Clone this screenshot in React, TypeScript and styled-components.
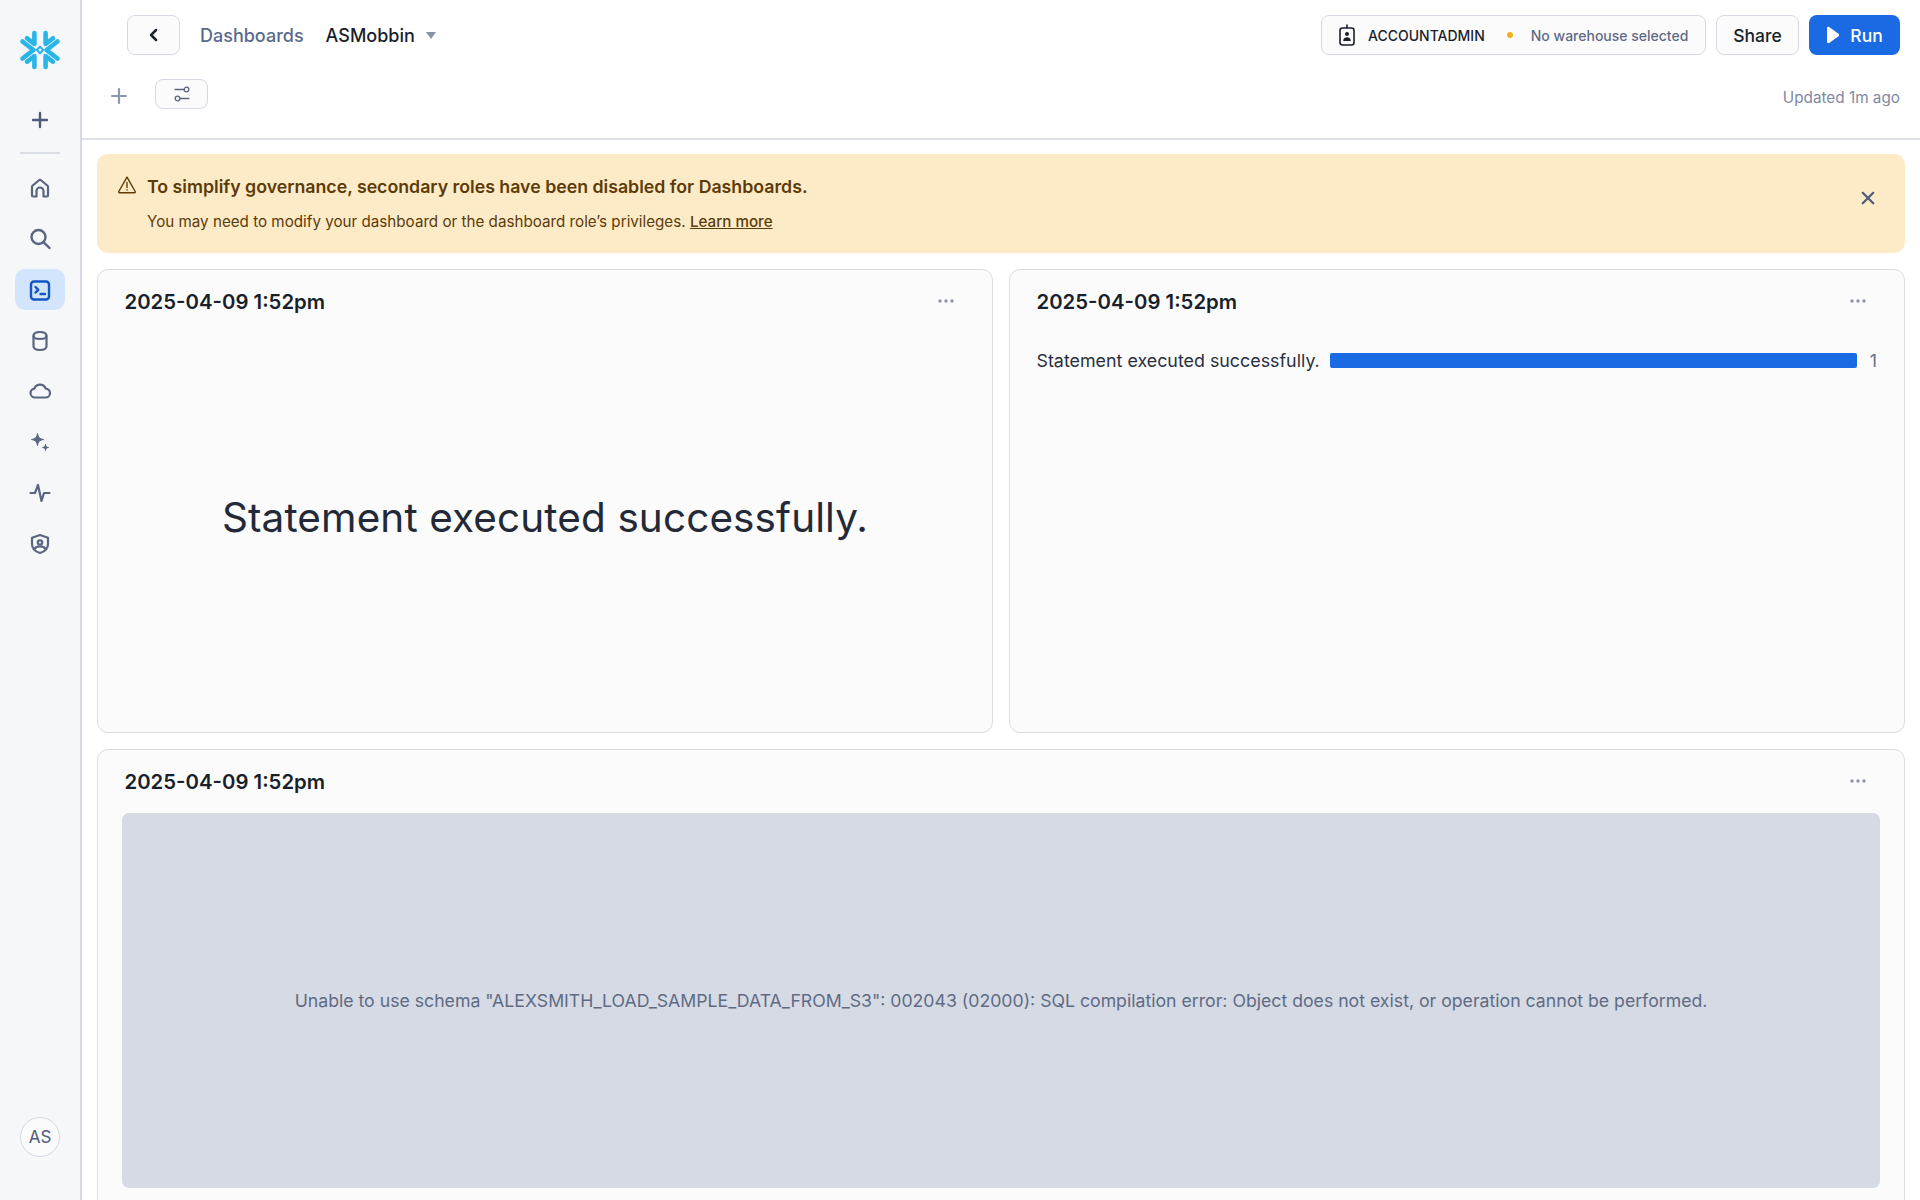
import React from "react";
import styled, { createGlobalStyle } from "styled-components";

const Global = createGlobalStyle`
  html, body { margin: 0; padding: 0; height: 100%; background: #fff; }
  body { font-family: Inter, "Liberation Sans", sans-serif; overflow: hidden; -webkit-font-smoothing: antialiased; }
  #root { height: 100%; }
  * { box-sizing: border-box; }
`;

const Page = styled.div`display: flex; width: 1920px; height: 1200px; overflow: hidden; background: #fff;`;

const Sidebar = styled.aside`
  width: 82px; flex: none; background: #f6f7f9; border-right: 2px solid #d5d9e2;
  display: flex; flex-direction: column; align-items: center; padding-top: 29px; padding-bottom: 43px;
`;
const Logo = styled.div`width: 42px; height: 42px; margin-bottom: 37px; svg { display: block; }`;
const AddItem = styled.div`width: 24px; height: 24px; color: #4f5b78; svg { display: block; }`;
const SideDivider = styled.div`width: 40px; height: 2px; background: #d9dde5; margin: 20px 0 13px;`;
const SideItem = styled.div<{ $active?: boolean }>`
  width: 50px; height: 41px; margin-bottom: 10px; border-radius: 10px; display: flex; align-items: center; justify-content: center;
  background: ${(p) => (p.$active ? "#d3e4fd" : "transparent")};
  color: ${(p) => (p.$active ? "#1457c4" : "#5a6580")};
  svg { display: block; }
`;
const Avatar = styled.div`
  margin-top: auto; width: 40px; height: 40px; border-radius: 50%; border: 1.5px solid #d5d9e2; background: #fbfbfc;
  display: flex; align-items: center; justify-content: center; color: #4f5b7a; font-size: 17px;
`;

const Main = styled.main`flex: 1; min-width: 0; display: flex; flex-direction: column;`;
const Header = styled.header`height: 140px; flex: none; border-bottom: 2px solid #dfe2e8; padding: 15px 20px 0 45px; display: flex; flex-direction: column;`;
const TopRow = styled.div`display: flex; align-items: center; height: 40px;`;
const SecondRow = styled.div`display: flex; align-items: center; height: 30px; margin-top: 24px;`;

const OutlineBtn = styled.button`
  border: 1.5px solid #d5d9e2; border-radius: 8px; background: #fbfbfc; display: flex; align-items: center; justify-content: center; padding: 0; font-family: inherit; color: #1a1f2c;
`;
const BackBtn = styled(OutlineBtn)`width: 53px; height: 40px; svg { display: block; }`;
const Crumb = styled.span`color: #5a6a8c; font-size: 18px; font-weight: 500; margin-left: 20px;`;
const Title = styled.span`color: #1a1f2c; font-size: 18px; font-weight: 500; margin-left: 22px;`;
const Caret = styled.span`width: 0; height: 0; margin-left: 11px; margin-top: 1px; border-left: 5.5px solid transparent; border-right: 5.5px solid transparent; border-top: 7px solid #8a93a5;`;
const Spacer = styled.div`flex: 1;`;
const ContextPill = styled(OutlineBtn)`width: 385px; height: 40px; justify-content: flex-start; padding-left: 17px;`;
const RoleName = styled.span`font-size: 14px; font-weight: 500; color: #1a1f2c; margin-left: 13px;`;
const Dot = styled.span`width: 6px; height: 6px; border-radius: 50%; background: #f2b01e; margin-left: 22px;`;
const Warehouse = styled.span`font-size: 14px; font-weight: 500; color: #5f6a85; margin-left: 18px;`;
const ShareBtn = styled(OutlineBtn)`width: 83px; height: 40px; margin-left: 10px; font-size: 17.5px; font-weight: 500;`;
const RunBtn = styled.button`
  width: 91px; height: 40px; margin-left: 10px; border: none; border-radius: 8px; background: #1a6ae3; color: #fff; font-family: inherit; font-size: 17.5px; font-weight: 500;
  display: flex; align-items: center; justify-content: center; gap: 10px; padding: 0; svg { display: block; }
`;
const PlusBtn = styled.div`width: 24px; height: 24px; margin: 3px 24px 0 -20px; color: #8b98b0; svg { display: block; }`;
const FilterBtn = styled(OutlineBtn)`width: 53px; height: 30px; margin-top: -1px; svg { display: block; }`;
const Updated = styled.span`font-size: 15.3px; color: #8089a0; margin-top: 6px;`;

const Content = styled.div`flex: 1; min-height: 0; overflow: hidden; padding: 14px 15px 0 15px; display: flex; flex-direction: column; gap: 16px;`;
const Banner = styled.div`
  height: 99px; flex: none; background: #fdebc8; border-radius: 11px; padding: 0 21px 0 20px; display: flex; align-items: center; color: #5c3b09;
`;
const WarnIcon = styled.div`width: 20px; height: 20px; margin-top: -37px; margin-right: 10px; flex: none; svg { display: block; }`;
const BannerText = styled.div`flex: 1; display: flex; flex-direction: column; gap: 14px;`;
const BannerTitle = styled.div`font-size: 17.74px; font-weight: 600; line-height: 22px;`;
const BannerBody = styled.div`font-size: 15.2px; line-height: 20px; a { color: inherit; text-decoration: underline; font-weight: 500; }`;
const CloseIcon = styled.div`width: 18px; height: 18px; color: #4f5c78; margin: 0 7px 12px 0; svg { display: block; }`;

const CardRow = styled.div`display: grid; grid-template-columns: 1fr 1fr; gap: 16px; height: 464px; flex: none;`;
const Card = styled.section`
  border: 1.5px solid #d9dce3; border-radius: 11px; background: #fbfbfc; display: flex; flex-direction: column; min-width: 0;
`;
const WideCard = styled(Card)`height: 480px; flex: none; border-bottom-left-radius: 0; border-bottom-right-radius: 0;`;
const CardHead = styled.div`height: 62px; flex: none; display: flex; align-items: center; justify-content: space-between; padding: 0 37px 0 26.5px;`;
const CardTitle = styled.h3`margin: 0; font-size: 20.35px; font-weight: 600; line-height: 24px; color: #1a1f2c; margin-top: 1px;`;
const Dots = styled.div`color: #8d96a8; width: 18px; margin-top: -1px; svg { display: block; }`;
const BigMessage = styled.div`flex: 1; display: flex; align-items: center; justify-content: center; font-size: 40.5px; color: #232937; padding-bottom: 30px; letter-spacing: 0.1px;`;
const BarRow = styled.div`display: flex; align-items: center; padding: 18px 27px 0 26.5px; font-size: 17.85px; color: #2a3040;`;
const BarTrack = styled.div`flex: 1; margin: 0 10px; height: 15px; background: #1a6ae3; border-radius: 2px;`;
const BarValue = styled.span`color: #66718a; margin-left: 3px;`;
const ErrorPanel = styled.div`
  margin: 1px 24px 0 24px; height: 375px; flex: none; border-radius: 7px; background: #d6dae4; display: flex; align-items: center; justify-content: center;
  font-size: 17.68px; color: #5f6b85;
`;

const Ico: React.FC<{ s?: number; w?: number; children: React.ReactNode }> = ({ s = 24, w = 2, children }) => (
  <svg width={s} height={s} viewBox="0 0 24 24" fill="none" stroke="currentColor" strokeWidth={w} strokeLinecap="round" strokeLinejoin="round">{children}</svg>
);

const SnowflakeLogo = () => (
  <svg width="42" height="42" viewBox="0 0 42 42" fill="none" stroke="#29b5e8" strokeWidth="4.6" strokeLinecap="round" strokeLinejoin="round">
    <path d="M15.4 4v11L8 9.300" />
    <path d="M26.600 4v11L34 9.300" />
    <path d="M15.400 38V27L8 32.700" />
    <path d="M26.600 38V27L34 32.700" />
    <path d="M3.500 12.500 14.500 21 3.500 29.500" />
    <path d="M38.500 12.500 27.500 21 38.500 29.500" />
    <path d="M21 16.300 25.700 21 21 25.700 16.300 21Z M21 19.200 19.200 21 21 22.800 22.800 21Z" fill="#29b5e8" fillRule="evenodd" stroke="none" />
  </svg>
);

const Header1 = () => (
  <Header>
    <TopRow>
      <BackBtn><Ico s={20} w={3}><path d="M14.500 6l-6 6 6 6" /></Ico></BackBtn>
      <Crumb>Dashboards</Crumb>
      <Title>ASMobbin</Title>
      <Caret />
      <Spacer />
      <ContextPill>
        <svg width="16" height="22" viewBox="0 0 16 22" fill="none" stroke="#1a1f2c" strokeWidth="1.600">
          <rect x="1" y="4" width="14" height="17" rx="2.500" />
          <path d="M8 0.500V4" />
          <circle cx="8" cy="10" r="2" fill="#1a1f2c" stroke="none" />
          <path d="M4.200 17c0-2.600 1.700-3.800 3.800-3.800s3.800 1.200 3.800 3.800z" fill="#1a1f2c" stroke="none" />
        </svg>
        <RoleName>ACCOUNTADMIN</RoleName>
        <Dot />
        <Warehouse>No warehouse selected</Warehouse>
      </ContextPill>
      <ShareBtn>Share</ShareBtn>
      <RunBtn>
        <svg width="14" height="18" viewBox="0 0 14 18"><path d="M1 2.200C1 1 2.200.4 3.200 1l9.300 6.700c.8.600.8 2 0 2.600L3.200 17C2.200 17.600 1 17 1 15.800z" fill="#fff" /></svg>
        Run
      </RunBtn>
    </TopRow>
    <SecondRow>
      <PlusBtn><Ico w={2.2}><path d="M12 5v14M5 12h14" /></Ico></PlusBtn>
      <FilterBtn>
        <svg width="16" height="16" viewBox="0 0 16 16" fill="none" stroke="#5a6580" strokeWidth="1.300" strokeLinecap="round">
          <path d="M1 3.500h9M6 12.500h9" /><circle cx="12.500" cy="3.500" r="2.300" /><circle cx="3.500" cy="12.500" r="2.300" />
        </svg>
      </FilterBtn>
      <Spacer />
      <Updated>Updated 1m ago</Updated>
    </SecondRow>
  </Header>
);

function Dot3() {
  return (
    <svg width="18" height="6" viewBox="0 0 18 6" fill="currentColor"><circle cx="3" cy="3" r="1.700" /><circle cx="9" cy="3" r="1.700" /><circle cx="15" cy="3" r="1.700" /></svg>
  );
}

export default function App() {
  return (
    <Page>
      <Global />
      <Sidebar>
        <Logo><SnowflakeLogo /></Logo>
        <AddItem><Ico w={2.4}><path d="M12 5v14M5 12h14" /></Ico></AddItem>
        <SideDivider />
        <SideItem><Ico w={2.2}><path d="M4 19.500V11c0-.6.3-1.100.7-1.500l6-5a2 2 0 0 1 2.600 0l6 5c.4.4.7.9.7 1.500v8.500a1 1 0 0 1-1 1h-3.500V15a3.500 3.500 0 0 0-7 0v5.500H5a1 1 0 0 1-1-1z" /></Ico></SideItem>
        <SideItem><Ico w={2.4}><circle cx="10.500" cy="10" r="7" /><path d="M15.800 15.300L21.500 21" /></Ico></SideItem>
        <SideItem $active><Ico w={2.4}><rect x="3" y="3.500" width="18" height="18" rx="3" /><path d="M7.500 9l2.800 2.800-2.800 2.800M12.500 16h4.500" /></Ico></SideItem>
        <SideItem><Ico w={2.2}><path d="M5.500 7c0-2.500 2.500-4 6.500-4s6.500 1.500 6.500 4v10c0 2.500-2.500 4-6.500 4s-6.500-1.500-6.500-4z" /><path d="M5.500 7c0 2 2.500 3 6.500 3s6.500-1 6.500-3" /></Ico></SideItem>
        <SideItem><Ico w={2.2}><path d="M7 17.500a4.500 4.500 0 0 1-.6-8.960A6 6 0 0 1 17.700 8.700 4.400 4.400 0 0 1 17.500 17.500z" /></Ico></SideItem>
        <SideItem>
          <svg width="24" height="24" viewBox="0 0 24 24" fill="currentColor" stroke="currentColor" strokeWidth="1" strokeLinejoin="round">
            <path d="M9.500 2.500c.5 3.800 2.200 5.500 6 6-3.800.5-5.500 2.200-6 6-.5-3.800-2.200-5.500-6-6 3.800-.5 5.500-2.200 6-6z" />
            <path d="M17.500 13.500c.2 1.900 1.100 2.800 3 3-1.900.2-2.800 1.100-3 3-.2-1.900-1.100-2.800-3-3 1.900-.2 2.800-1.100 3-3z" />
          </svg>
        </SideItem>
        <SideItem><Ico w={2.2}><path d="M2.500 11H7l3-8 3.500 16 2.500-8h5.500" /></Ico></SideItem>
        <SideItem><Ico w={2.2}><path d="M12 2l8 2.800V11c0 4.500-3.200 7.600-8 9-4.800-1.400-8-4.500-8-9V4.800z" /><circle cx="12" cy="9.500" r="2.200" /><path d="M6.500 16c1-2 3-2.700 5.500-2.700s4.500.7 5.500 2.700" /></Ico></SideItem>
        <Avatar>AS</Avatar>
      </Sidebar>
      <Main>
        <Header1 />
        <Content>
          <Banner>
            <WarnIcon>
              <svg width="20" height="20" viewBox="0 0 20 20" fill="none" stroke="currentColor" strokeWidth="1.400" strokeLinejoin="round" strokeLinecap="round">
                <path d="M10 2.200 18.200 16.500a.8.800 0 0 1-.7 1.200h-15a.8.800 0 0 1-.7-1.200z" /><path d="M10 7.500v5M10 14.800v.2" />
              </svg>
            </WarnIcon>
            <BannerText>
              <BannerTitle>To simplify governance, secondary roles have been disabled for Dashboards.</BannerTitle>
              <BannerBody>You may need to modify your dashboard or the dashboard role’s privileges. <a>Learn more</a></BannerBody>
            </BannerText>
            <CloseIcon><Ico s={18} w={3}><path d="M5 5l14 14M19 5L5 19" /></Ico></CloseIcon>
          </Banner>
          <CardRow>
            <Card>
              <CardHead><CardTitle>2025-04-09 1:52pm</CardTitle><Dots><Dot3 /></Dots></CardHead>
              <BigMessage>Statement executed successfully.</BigMessage>
            </Card>
            <Card>
              <CardHead><CardTitle>2025-04-09 1:52pm</CardTitle><Dots><Dot3 /></Dots></CardHead>
              <BarRow>
                <span>Statement executed successfully.</span>
                <BarTrack />
                <BarValue>1</BarValue>
              </BarRow>
            </Card>
          </CardRow>
          <WideCard>
            <CardHead><CardTitle>2025-04-09 1:52pm</CardTitle><Dots><Dot3 /></Dots></CardHead>
            <ErrorPanel>Unable to use schema "ALEXSMITH_LOAD_SAMPLE_DATA_FROM_S3": 002043 (02000): SQL compilation error: Object does not exist, or operation cannot be performed.</ErrorPanel>
          </WideCard>
        </Content>
      </Main>
    </Page>
  );
}
